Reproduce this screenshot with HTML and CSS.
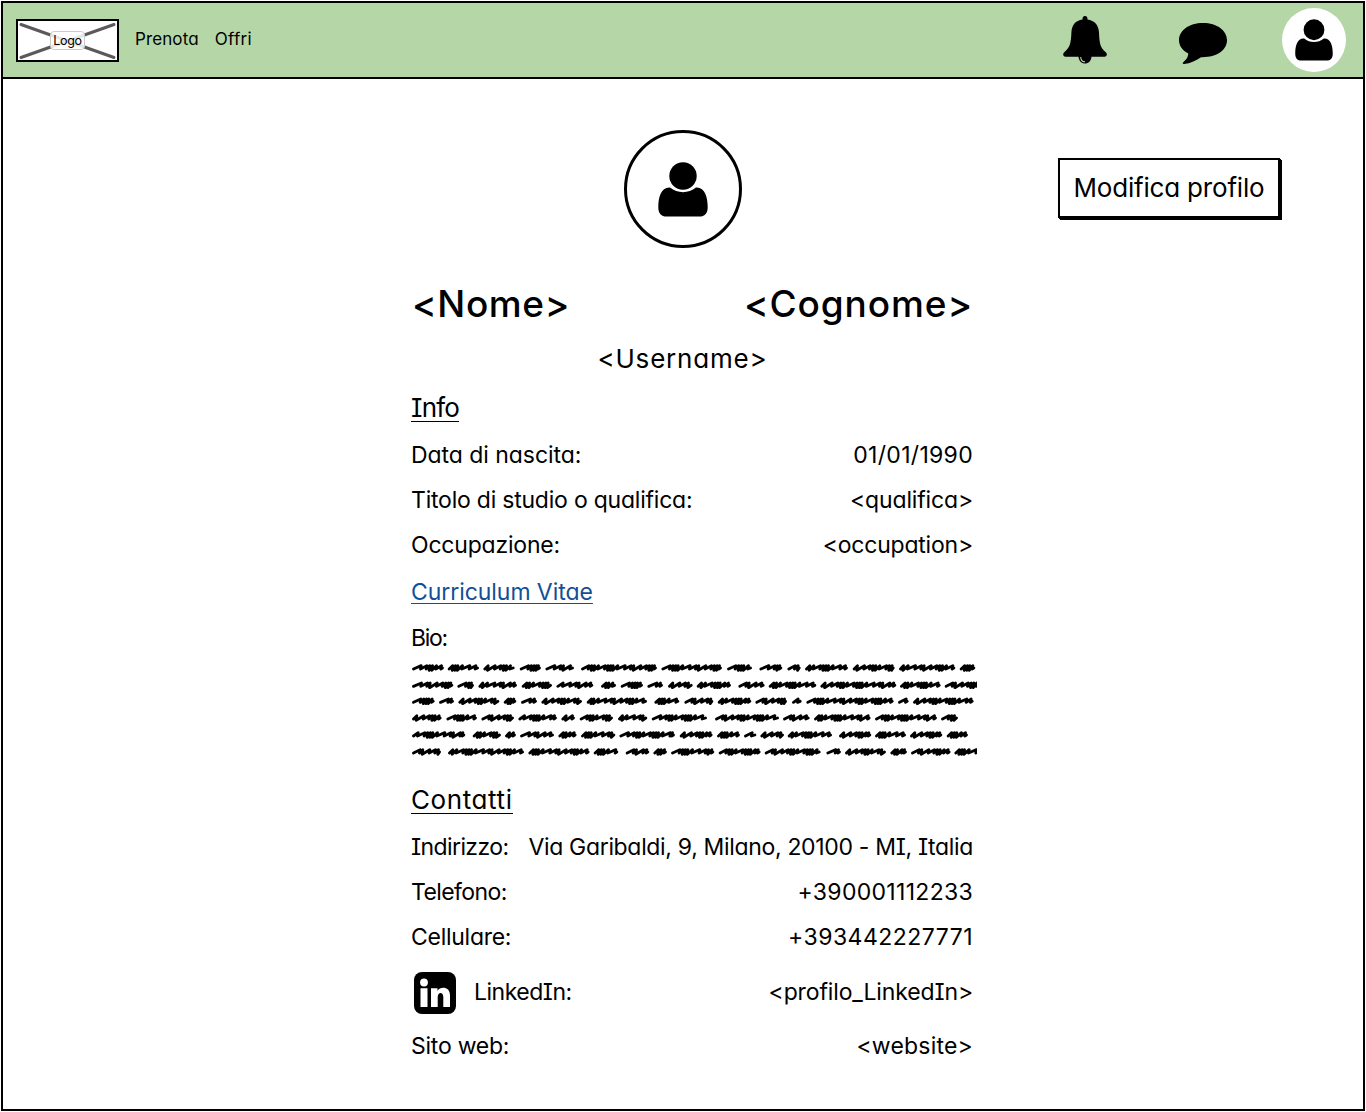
FILE: index.html
```
<!DOCTYPE html>
<html lang="it">
<head>
<meta charset="utf-8">
<title>Profilo utente</title>
<link rel="stylesheet" href="styles.css">
</head>
<body>
<svg width="0" height="0" class="defs" aria-hidden="true">
  <symbol id="person" viewBox="0 0 50 55">
    <circle cx="25" cy="14" r="13.7"/>
    <path d="M12 25.5C3 25 .3 35 .3 45.500C.3 51.500 3.500 54.600 8.500 54.600H41.500C46.500 54.600 49.700 51.500 49.700 45.500C49.700 35 47 25 38 25.500C30.500 31.700 19.500 31.700 12 25.500Z"/>
  </symbol>
</svg>
<div class="page">
  <header class="bar">
    <div class="logo">
      <svg class="logo-cross" viewBox="2 2 99 39" aria-hidden="true"><path d="M5 5.500 98 38.500M5 38.500 98 5.500"/></svg>
      <span class="logo-label">Logo</span>
    </div>
    <nav class="menu"><a class="t-prenota">Prenota</a><a class="t-offri">Offri</a></nav>
    <div class="tools">
      <svg class="bell" viewBox="0 0 44 48" aria-label="Notifiche">
        <path d="M22 0C23.700 0 24.600 1.200 24.500 3.500C31.500 4.500 35.600 9 36 16.500C36.400 28 37.500 32 43 36.500C44.600 38.500 43.800 40.700 41.500 40.700H2.500C.2 40.700-.6 38.500 1 36.500C6.500 32 8 28 8.400 16.500C8.800 9 12.500 4.500 19.500 3.500C19.400 1.200 20.300 0 22 0Z"/>
        <path d="M15.500 40C15.500 50 28.500 50 28.500 40Z"/>
        <path class="glint" d="M17.700 41C17.700 44 19.500 45.700 22 45.900"/>
      </svg>
      <svg class="chat" viewBox="0 0 48 41" aria-label="Messaggi">
        <path d="M24 0C38 0 48 7.500 48 17.300C48 27.500 37 34.700 22 34.200C17.500 37.500 11.500 40.300 5 41C3.300 41 3.500 40 4.500 39C7.500 36.500 9 34 9.300 30.500C3.500 27.500 0 23 0 17.300C0 7.500 10 0 24 0Z"/>
      </svg>
      <div class="user"><svg aria-label="Profilo"><use href="#person"/></svg></div>
    </div>
  </header>
  <main>
    <div class="top">
      <div class="avatar"><svg aria-hidden="true"><use href="#person"/></svg></div>
      <button class="edit">Modifica profilo</button>
    </div>
    <section class="profile">
      <h1 class="name"><span class="t-nome">&lt;Nome&gt;</span><span class="t-cognome">&lt;Cognome&gt;</span></h1>
      <p class="username">&lt;Username&gt;</p>
      <h2 class="title t-info"><span>Info</span></h2>
      <div class="row"><span class="t-data">Data di nascita:</span><span class="t-date">01/01/1990</span></div>
      <div class="row"><span class="t-titolo">Titolo di studio o qualifica:</span><span class="t-qualifica">&lt;qualifica&gt;</span></div>
      <div class="row"><span class="t-occ">Occupazione:</span><span class="t-occupation">&lt;occupation&gt;</span></div>
      <div class="row cv"><a>Curriculum Vitae</a></div>
      <div class="row bio"><span class="t-bio">Bio:</span></div>
      <svg class="scribble" viewBox="21 15 1695 309" aria-hidden="true"></svg>
      <h2 class="title t-contatti"><span>Contatti</span></h2>
      <div class="row"><span class="t-indirizzo">Indirizzo:</span><span class="t-via">Via Garibaldi, 9, Milano, 20100 - MI, Italia</span></div>
      <div class="row"><span class="t-telefono">Telefono:</span><span class="t-tel">+390001112233</span></div>
      <div class="row"><span class="t-cellulare">Cellulare:</span><span class="t-cell">+393442227771</span></div>
      <div class="row linkedin">
        <svg class="in" viewBox="0 0 42 42" aria-hidden="true">
          <rect width="42" height="42" rx="8"/>
          <g><circle cx="10" cy="10.500" r="3.900"/><path d="M6.500 16.200H13.500V35H6.500ZM17 16.200H23.500V19C26 14.300 36 14 36 23.500V35H29.300V25C29.300 19.300 23.700 20 23.700 25V35H17Z"/></g>
        </svg>
        <span class="t-li">LinkedIn:</span><span class="value t-profilo">&lt;profilo_LinkedIn&gt;</span>
      </div>
      <div class="row"><span class="t-sito">Sito web:</span><span class="t-website">&lt;website&gt;</span></div>
    </section>
  </main>
</div>
<script src="scribble.js"></script>
</body>
</html>
```
FILE: styles.css
```
* { box-sizing: border-box; }
body {
  margin: 0;
  background: #fff;
  color: #000;
  font: 23px "Inter", "Noto Sans", sans-serif;
  font-feature-settings: "cv11", "cv08";
}
h1, h2, p { margin: 0; font-weight: 400; }
svg { display: block; }
.defs { position: absolute; }

.page {
  width: 1366px;
  height: 1112px;
  padding: 1px;
  overflow: hidden;
}
.bar {
  display: flex;
  align-items: center;
  width: 1364px;
  height: 78px;
  padding: 0 17px 0 13px;
  border: 2px solid #000;
  background: #b5d7a8;
}
.logo {
  display: grid;
  grid-template: 39px / 99px;
  place-items: center;
  border: 2px solid #000;
  background: #fff;
}
.logo > * { grid-area: 1 / 1; }
.logo-cross { width: 99px; height: 39px; }
.logo-cross path { fill: none; stroke: #5a5a5a; stroke-width: 3; stroke-linecap: round; }
.logo-label {
  width: 35px;
  height: 19px;
  border: 1px solid #ccc;
  border-radius: 4px;
  background: rgba(255, 255, 255, .85);
  font-size: 12.500px;
  line-height: 17px;
  letter-spacing: -.3px;
  text-align: center;
}
.menu { display: flex; gap: 16px; margin-left: 16px; padding-bottom: 2px; font-size: 17px; }
.tools { display: flex; align-items: center; margin-left: auto; }
.bell { width: 44px; height: 48px; }
.glint { fill: none; stroke: #b5d7a8; stroke-width: 1.100; }
.chat { width: 48px; height: 41px; margin: 6px 55px 0 72px; }
.user {
  display: grid;
  place-items: center;
  width: 64px;
  height: 64px;
  border-radius: 50%;
  background: #fff;
}
.user svg { width: 38px; height: 42px; }

main {
  width: 1364px;
  height: 1032px;
  border: 2px solid #000;
  border-top: 0;
}
.top {
  display: grid;
  grid-template-columns: 1fr 118px 1fr;
  align-items: center;
  height: 199px;
  padding: 21px 81px 0;
}
.avatar {
  display: grid;
  place-items: center;
  grid-column: 2;
  width: 118px;
  height: 118px;
  border: 3px solid #000;
  border-radius: 50%;
}
.avatar svg { width: 50px; height: 55px; }
.edit {
  justify-self: end;
  width: 222px;
  height: 60px;
  margin: 0 2px 2px 0;
  padding: 0 0 2px;
  border: 2px solid #000;
  background: #fff;
  box-shadow: 1px 1px 0 #000, 2px 2px 0 #000;
  color: #000;
  font: inherit;
  font-feature-settings: inherit;
  font-size: 26px;
  letter-spacing: -.19px;
}

.profile { width: 562px; margin-left: 408px; }
.name { display: flex; justify-content: space-between; height: 52px; padding-left: 1px; font-size: 37px; font-weight: 500; line-height: 52px; }
.username { height: 57px; padding-right: 19px; font-size: 26px; line-height: 58px; letter-spacing: .81px; text-align: center; }
.title { height: 46px; padding-top: 2px; font-size: 26px; line-height: 38px; }
.title span { display: inline-block; height: 33px; border-bottom: 1px solid #000; }
.row { display: flex; justify-content: space-between; height: 45px; line-height: 45px; white-space: nowrap; }
.cv { height: 47px; line-height: 49px; }
.cv a { height: 36px; border-bottom: 1px solid #134f96; color: #134f96; letter-spacing: -.06px; }
.bio { line-height: 47px; }
.scribble { width: 566px; height: 103px; margin-bottom: 16px; }
.scribble path { fill: none; stroke: #000; stroke-width: 8.500; stroke-linejoin: round; stroke-linecap: round; }
.linkedin { align-items: center; justify-content: flex-start; height: 64px; line-height: 64px; }
.in { width: 42px; height: 42px; margin: 2px 18px 0 3px; }
.in g { fill: #fff; }
.value { margin-left: auto; }

.t-prenota { letter-spacing: .11px; }
.t-offri { letter-spacing: .3px; }
.t-nome { letter-spacing: .6px; }
.t-cognome { letter-spacing: .9px; }
.t-info { letter-spacing: -.8px; }
.t-contatti { letter-spacing: .6px; }
.t-data { letter-spacing: -.05px; }
.t-titolo { letter-spacing: -.22px; }
.t-qualifica { letter-spacing: -.15px; }
.t-occ, .t-occupation { letter-spacing: -.2px; }
.t-bio { letter-spacing: -1.300px; }
.t-indirizzo { letter-spacing: -.6px; }
.t-via { letter-spacing: -.33px; }
.t-telefono { letter-spacing: -.6px; }
.t-cellulare { letter-spacing: -.27px; }
.t-li { letter-spacing: -.5px; }
.t-profilo { letter-spacing: -.13px; }
.t-sito { letter-spacing: -.25px; }
.t-date { letter-spacing: .3px; }
.t-tel { letter-spacing: .3px; }
.t-cell { letter-spacing: .48px; }
.t-website { letter-spacing: .2px; }
```
FILE: scribble.js
```
// Placeholder handwriting: each line is a list of word extents [start, end].
const lines = [
  [38, "23-118,130-223,237-330,346-409,423-508,530-757,771-952,968-1042,1065-1133,1149-1188,1202-1330,1345-1470,1484-1652,1666-1712"],
  [90, "23-146,159-208,222-337,352-442,456-566,590-634,649-715,729-775,791-864,877-979,1002-1080,1093-1235,1248-1475,1487-1608,1621-1724"],
  [138, "23-90,104-148,162-284,298-335,350-397,411-532,547-727,750-824,840-926,940-1040,1053-1147,1163-1191,1206-1467,1481-1512,1526-1707"],
  [188, "23-111,126-217,231-328,342-457,471-511,526-625,641-728,742-907,932-1123,1136-1215,1229-1398,1412-1597,1610-1660"],
  [239, "23-182,205-289,302-334,347-448,462-516,530-632,645-811,826-924,938-1006,1019-1055,1068-1138,1150-1282,1304-1400,1412-1504,1517-1613,1627-1690"],
  [290, "23-109,131-358,372-555,568-641,664-734,747-787,800-929,943-1068,1081-1248,1266-1309,1322-1444,1458-1507,1520-1638,1650-1724"]
];
const steps = [21, 17, 9, 8, 12, 20, 9, 8, 7, 14, 22, 18, 8];
let d = "";
let k = 0;
for (const [y, words] of lines) {
  for (const word of words.split(",")) {
    const [start, end] = word.split("-").map(Number);
    let x = start + 4;
    d += `M${x} ${y + 4}`;
    while (x < end - 14) {
      const step = steps[k++ % steps.length];
      const next = Math.min(x + step, end - 9);
      const low = step < 10 ? 8 : 4;
      d += `L${next + 2} ${y - 6}L${next} ${y + low}`;
      x = next;
    }
    d += `L${end - 4} ${y + 1}`;
  }
}
const path = document.createElementNS("http://www.w3.org/2000/svg", "path");
path.setAttribute("d", d);
document.querySelector(".scribble").append(path);
```
